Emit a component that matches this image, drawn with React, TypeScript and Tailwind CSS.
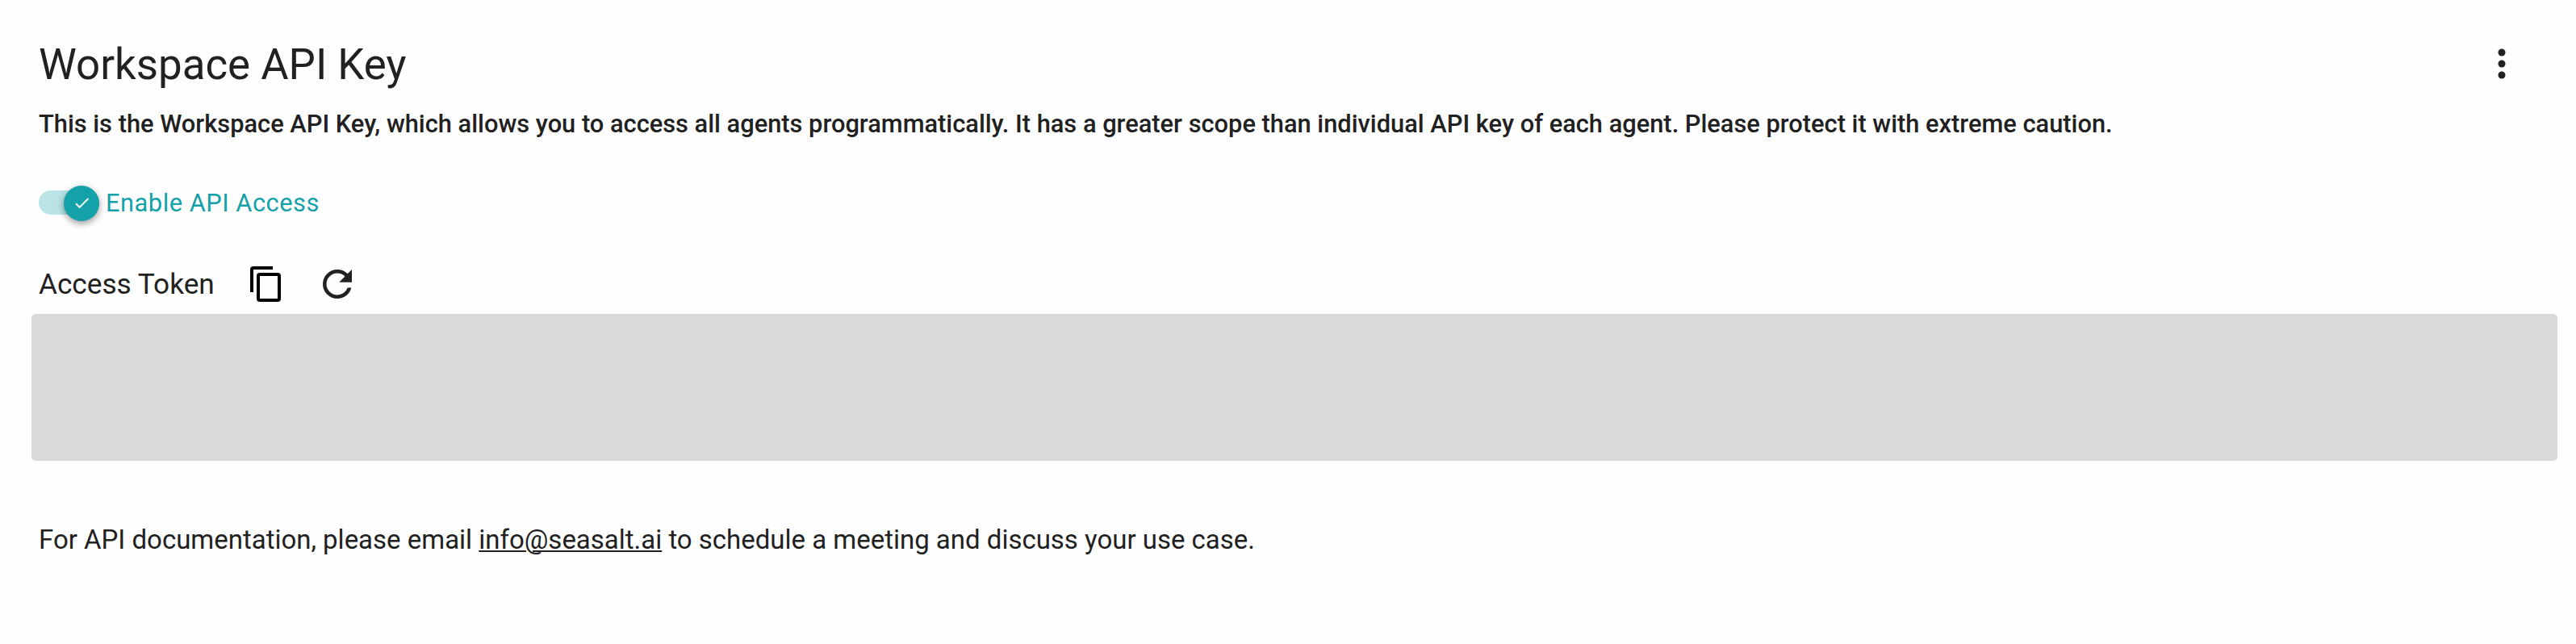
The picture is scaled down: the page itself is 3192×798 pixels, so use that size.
export default function App() {
  return (
    <main className="flex h-[798px] w-[3192px] flex-col bg-[#fefefe] pl-12 font-['Roboto',sans-serif] text-[#212121]">
      <header className="mt-[46px] flex h-[68px] items-center justify-between pr-[64px]">
        <h1 className="whitespace-nowrap text-[52.8px] leading-[68px]">Workspace API Key</h1>
        <svg className="mb-[2px] size-[56px]" viewBox="0 0 56 56" fill="currentColor">
          <circle cx="28" cy="14" r="4.5" />
          <circle cx="28" cy="28" r="4.5" />
          <circle cx="28" cy="42" r="4.5" />
        </svg>
      </header>
      <p className="mt-[18px] whitespace-nowrap text-[30.82px] font-medium leading-[44px]">
        This is the Workspace API Key, which allows you to access all agents programmatically. It has a greater scope than individual API key of each agent. Please protect it with extreme caution.
      </p>
      <div className="mt-[52px] flex h-[48px] items-center text-[#14a1a8]">
        <div className="mb-[2px] flex h-[30px] w-[75px] items-center justify-end rounded-full bg-[#b9e3e5]">
          <div className="mt-[2px] flex size-[44px] shrink-0 items-center justify-center rounded-full bg-[#14a1a8] shadow-[0_3px_8px_rgba(0,0,0,0.4)]">
            <svg className="mb-[2px] size-[23px] text-white" viewBox="0 0 24 24" fill="currentColor"><path d="M21 7 9 19l-5.5-5.5 1.41-1.41L9 16.17 19.59 5.59z" /></svg>
          </div>
        </div>
        <span className="ml-[8px] whitespace-nowrap text-[30.8px] leading-[38px] tracking-[0.52px]">Enable API Access</span>
      </div>
      <div className="mt-[52px] flex h-[48px] items-center">
        <span className="w-[258px] whitespace-nowrap text-[35.2px] leading-[42px]">Access Token</span>
        <svg className="size-[48px] text-black" viewBox="0 0 24 24" fill="currentColor"><path d="M19 21H8V7h11m0-2H8a2 2 0 0 0-2 2v14a2 2 0 0 0 2 2h11a2 2 0 0 0 2-2V7a2 2 0 0 0-2-2m-3-4H4a2 2 0 0 0-2 2v14h2V3h12z" /></svg>
        <svg className="ml-[37px] size-[54px]" viewBox="0 0 24 24" fill="currentColor"><path d="M17.65 6.35A7.958 7.958 0 0 0 12 4a8 8 0 0 0-8 8 8 8 0 0 0 8 8c3.73 0 6.84-2.55 7.73-6h-2.08A5.99 5.99 0 0 1 12 18a6 6 0 0 1-6-6 6 6 0 0 1 6-6c1.66 0 3.14.69 4.22 1.78L13 11h7V4z" /></svg>
      </div>
      <div className="-ml-[9px] mt-[13px] h-[182px] w-[3130px] rounded-[5px] bg-[#d9d9d9]" />
      <p className="mt-[76px] whitespace-nowrap text-[32.98px] leading-[43px]">
        For API documentation, please email <a className="underline decoration-2 underline-offset-2" href="mailto:info@seasalt.ai">info@seasalt.ai</a> to schedule a meeting and discuss your use case.
      </p>
    </main>
  );
}
